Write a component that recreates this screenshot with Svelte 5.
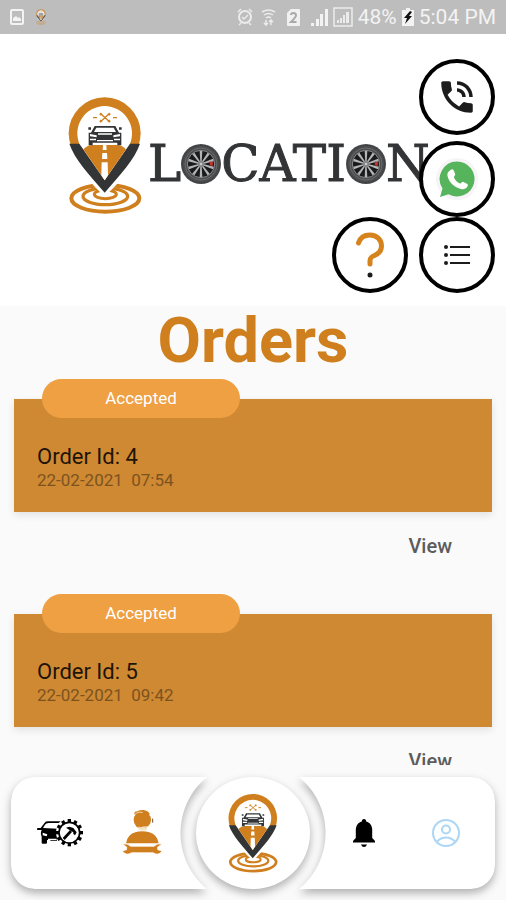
<script lang="ts">
  let orders = [
    { id: 4, status: "Accepted", date: "22-02-2021", time: "07:54" },
    { id: 5, status: "Accepted", date: "22-02-2021", time: "09:42" },
  ];

  const spokes = [0, 36, 72, 108, 144, 180, 216, 252, 288, 324];
  const teeth = [0, 30, 60, 90, 120, 150, 180, 210, 240, 270, 300, 330];
</script>

{#snippet pin(cls: string)}
  <svg class={cls} viewBox="56 32 222 360" aria-hidden="true">
    <g fill="none" stroke="#cf7f1d">
      <ellipse cx="168" cy="339" rx="102" ry="40" stroke-width="12" />
      <ellipse cx="168" cy="333" rx="67" ry="25" stroke-width="10" />
      <ellipse cx="168" cy="327" rx="33" ry="13" stroke-width="9" />
    </g>
    <path d="M72 220 H260 C236 262 206 294 166 334 C126 294 96 262 72 220Z" fill="#fff" />
    <circle cx="166" cy="144" r="108" fill="#cf7f1d" />
    <path d="M60 175 H272 C256 222 214 266 166 322 C118 266 76 222 60 175Z" fill="#333436" />
    <path d="M90 175 A82 82 0 1 1 242 175 L166 285Z" fill="#fff" />
    <path d="M102 192 Q114 179 130 179 H202 Q218 179 230 192 L166 285Z" fill="#cf7f1d" />
    <path d="M161 179h10l1 15h-12zM159 203h14l1 18h-16zM157 231h18l1 39-10 15-10-15z" fill="#fff" />
    <path d="M136 122 H198 L209 142 H216 V180 H204 V172 H130 V180 H118 V142 H125Z" fill="#333436" />
    <path d="M141 127 H193 L200 140 H134Z" fill="#fff" />
    <path d="M122 146 l20 4 v6 l-20 -3zM212 146 l-20 4 v6 l20 -3zM146 144h42v4h-42zM122 160h18v5h-18zM194 160h18v5h-18zM143 164h48v4h-48z" fill="#fff" />
    <path d="M117 126h8v7h-8zM209 126h8v7h-8z" fill="#333436" />
    <g stroke="#cf7f1d" stroke-width="4" fill="none">
      <path d="M156 87 L178 107 M178 87 L156 107 M131 97h12M191 97h12" />
      <path d="M152 84l5 5M182 84l-5 5M152 110l5 -5M182 110l-5 -5" stroke-width="7" />
    </g>
  </svg>
{/snippet}

{#snippet tyre()}
  <svg class="tyre" viewBox="-60 -60 120 120" aria-hidden="true">
    <circle r="60" fill="#4b4c4e" />
    <circle r="56" fill="none" stroke="#2a2a2b" stroke-width="2" stroke-dasharray="4 3" />
    <circle r="48" fill="none" stroke="#6b6c6e" stroke-width="3" />
    <circle r="41" fill="#1b1b1c" stroke="#8d8e90" stroke-width="3" />
    {#each spokes as angle}
      <path d="M-2 -6 L-4 -39 L4 -39 L2 -6Z" fill="#b4b5b7" transform="rotate({angle})" />
    {/each}
    <path d="M27 -8 L36 -5 L35 6 L26 4Z" fill="#c8322f" />
    <circle r="9" fill="#838486" />
    <circle r="4" fill="#c9cacb" />
  </svg>
{/snippet}

<div class="screen">
  <div class="status">
    <svg width="14" height="16" viewBox="0 0 14 16">
      <rect x="1" y="1" width="12" height="14" rx="1" fill="none" stroke="#f3f3f3" stroke-width="2" />
      <path d="M3 12V9l3-2 2 2 1-1 2 2v2z" fill="#f3f3f3" />
    </svg>
    {@render pin("mini-pin")}
    <div class="status-right">
      <svg width="16" height="18" viewBox="0 0 16 18" fill="none" stroke="#ececec" stroke-width="2">
        <circle cx="8" cy="9" r="6" />
        <path d="M5 9l2 2 4-4M1 4l3-3M15 4l-3-3M4 15l-2 2M12 15l2 2" stroke-width="1.5" />
      </svg>
      <svg class="wifi" width="15" height="18" viewBox="0 0 15 18" fill="none" stroke="#ececec" stroke-width="1.5">
        <path d="M1 4q6.5-4 13 0M3 7q4.5-3 9 0M5 10q2.5-2 5 0" />
        <path d="M5 12v5M3 15l2 2 2-2M10 17v-5M8 14l2-2 2 2" />
      </svg>
      <svg class="sim" width="13" height="17" viewBox="0 0 13 17">
        <path d="M4 0h8q1 0 1 1v15q0 1-1 1H1q-1 0-1-1V4z" fill="#f0f0f0" />
        <path d="M4 6q0-2 2.5-2T9 6.5Q9 8 4 13h5.5" fill="none" stroke="#aaa" stroke-width="2" />
      </svg>
      <svg class="signal" width="17" height="17" viewBox="0 0 17 17" fill="#f3f3f3">
        <path d="M0 14h3v3H0zM5 10h3v7H5zM9 5h3v12H9zM14 0h3v17h-3z" />
      </svg>
      <svg width="20" height="20" viewBox="0 0 20 20">
        <rect x="1" y="1" width="18" height="18" fill="none" stroke="#ececec" stroke-width="1.5" />
        <path d="M4 13h2v3H4zM7 11h2v5H7zM10 8h2v8h-2zM13 5h3v11h-3z" fill="#ececec" />
      </svg>
      <span>48%</span>
      <svg width="12" height="18" viewBox="0 0 12 18">
        <path d="M4 0h4v2h4v16H0V2h4z" fill="#f3f3f3" />
        <path d="M8 3L2 10h3l-2 6 7-8H7l3-4z" fill="#111" />
      </svg>
      <span>5:04 PM</span>
    </div>
  </div>

  <header>
    <div class="logo" role="img" aria-label="Location">
      {@render pin("big-pin")}
      <div class="wordmark">L{@render tyre()}CATI{@render tyre()}N</div>
    </div>

    <div class="actions">
      <button class="round" aria-label="Call">
        <svg width="42" height="42" viewBox="0 0 24 24" fill="#1c1c1c">
          <path d="M20 15.5c-1.25 0-2.45-.2-3.57-.57-.35-.11-.74-.03-1.02.24l-2.2 2.2c-2.83-1.44-5.15-3.75-6.59-6.59l2.2-2.21c.28-.26.36-.65.25-1C8.7 6.45 8.5 5.25 8.5 4c0-.55-.45-1-1-1H4c-.55 0-1 .45-1 1 0 9.39 7.61 17 17 17 .55 0 1-.45 1-1v-3.5c0-.55-.45-1-1-1zM19 12h2c0-4.97-4.03-9-9-9v2c3.87 0 7 3.13 7 7zm-4 0h2c0-2.76-2.24-5-5-5v2c1.66 0 3 1.34 3 3z" />
        </svg>
      </button>
      <button class="round" aria-label="WhatsApp">
        <svg width="44" height="44" viewBox="0 0 44 44">
          <circle cx="22" cy="22" r="21" fill="#f6f4f6" />
          <path d="M22 4.5A17.5 17.5 0 1 1 13.5 37.3L5 40l2.5-8.5A17.5 17.5 0 0 1 22 4.5z" fill="#56b45c" />
          <path d="M15.5 13c1.5-1.2 2.5-1 3.2.5l1.5 3.5c.5 1.2-1.6 2.5-1.2 3.5 1.2 2.8 3.3 4.9 6 6 1.2.5 2-2.2 3.4-1.6l3.5 1.8c1.3.8 1.1 1.6.4 3-1 2-4 3-6.5 2.3C18.5 29.8 14 25 12.5 19c-.7-2.6.8-4.6 3-6z" fill="#fff" />
        </svg>
      </button>
      <div class="pair">
        <button class="round" aria-label="Help">
          <svg width="30" height="46" viewBox="0 0 30 46">
            <path d="M3.5 11C5 6 9 3 15 3C22 3 26.5 8 26.5 14C26.5 19 24 21.500 19.500 23.500C16 25 15 26 15 29V32" fill="none" stroke="#d6831d" stroke-width="5" stroke-linecap="round" />
            <circle cx="15" cy="43" r="2.5" fill="#1c1c1c" />
          </svg>
        </button>
        <button class="round" aria-label="Menu">
          <svg width="26" height="22" viewBox="0 0 26 22" fill="#1c1c1c">
            <circle cx="2" cy="3" r="2" /><circle cx="2" cy="11" r="2" /><circle cx="2" cy="19" r="2" />
            <path d="M6 2h20v2H6zM6 10h20v2H6zM6 18h20v2H6z" />
          </svg>
        </button>
      </div>
    </div>
  </header>

  <h1>Orders</h1>

  <main>
    {#each orders as order}
      <article>
        <div class="badge">{order.status}</div>
        <div class="card">
          <div class="order-id">Order Id: {order.id}</div>
          <div class="date">{order.date + "  " + order.time}</div>
        </div>
        <div class="footer"><button class="view">View</button></div>
      </article>
    {/each}
  </main>

  <nav>
    <div class="bar-shadow"><div class="bar"></div></div>
    <div class="tabs">
      <button aria-label="Car service">
        <svg width="48" height="30" viewBox="108 174 144 90">
          <path d="M112 204h10l12-16q3-4 10-4h38l-6 5h-30q-8 0-11 5l-6 10 44 2-2 36h-20v-2h-10v8q0 3-4 3h-8q-4 0-4-3v-18q-4-6-2-14l2-6h-14z" />
          <path d="M128 218l14 5-2 6-12-3zM144 236h26v4h-26z" fill="#fff" />
          <circle cx="208" cy="218" r="40" fill="#fff" />
          {#each teeth as angle}
            <path d="M-5 -41h10v10h-10z" transform="translate(208 218) rotate({angle})" />
          {/each}
          <circle cx="208" cy="218" r="31" fill="#fff" stroke="#000" stroke-width="5" />
          <path d="M191 237L213 213" stroke="#000" stroke-width="8" />
          <path d="M198 203l10-3 12 4 10 13-5 9-5-4v-5l-8-5z" />
        </svg>
      </button>
      <button aria-label="Mechanic">
        <svg width="42" height="48" viewBox="363 148 126 144">
          <g fill="#cf7f1d">
            <circle cx="427" cy="181" r="26" />
            <path d="M403 164q-1-9 9-9 8-5 18-4 14 1 20 13l-6 1q-18-8-34 0z" />
            <path d="M378 251q4-26 28-33 20-7 42 0 24 7 28 33z" />
            <path d="M368 254q14-5 24 6h70q10-11 24-6l-13 8v8l13 4q-10 16-27 5h-64q-17 11-28-5l13-4v-8z" stroke="#fff" stroke-width="2" />
          </g>
          <path d="M406 162q10-7 22-4M457 185q-2 13-15 16l-12 1" fill="none" stroke="#fff" stroke-width="2" />
          <path d="M416 199q5 6 9 3t8 0q6 3 8-3v10q-12 7-25 0z" fill="#f5dfc3" />
          <path d="M458 177v12" stroke="#7b4a32" stroke-width="3" />
        </svg>
      </button>
      <button class="home" aria-label="Home">{@render pin("home-pin")}</button>
      <button aria-label="Notifications">
        <svg width="24" height="28" viewBox="0 0 24 28">
          <path d="M12 0c1.5 0 2.2 1 2.2 2.5 4 1 6 4.5 6 8.5v8L23 22v1.500H1V22l2.800-3v-8c0-4 2-7.500 6-8.500C9.800 1 10.500 0 12 0zM9 25.500h6q-1 2.500-3 2.500t-3-2.500z" />
        </svg>
      </button>
      <button aria-label="Profile">
        <svg width="28" height="28" viewBox="0 0 28 28" fill="none" stroke="#acd6f6" stroke-width="2">
          <circle cx="14" cy="14" r="13" />
          <circle cx="14" cy="10.500" r="4" />
          <path d="M5 22.500Q9 18.500 14 18.500t9 4" />
        </svg>
      </button>
    </div>
  </nav>
</div>

<style>
  :global(body) {
    background: #fafafa;
  }
  .screen {
    display: flex;
    flex-direction: column;
    height: 100vh;
    font-family: Roboto, "Liberation Sans", sans-serif;
    background: #fafafa;
  }
  button {
    background: none;
    border: none;
    padding: 0;
    font-family: inherit;
    cursor: pointer;
  }
  svg {
    display: block;
    flex: none;
  }

  .status {
    display: flex;
    align-items: center;
    gap: 11px;
    height: 34px;
    flex: none;
    padding: 0 10px;
    background: #bdbdbd;
    color: #f3f3f3;
    font-size: 21px;
  }
  .mini-pin {
    width: 12px;
    height: 16px;
    opacity: 0.7;
  }
  .status-right {
    display: flex;
    align-items: center;
    gap: 5px;
    margin-left: auto;
  }
  .wifi,
  .sim {
    margin: 0 3px;
  }
  .signal {
    margin-left: 3px;
  }

  header {
    position: relative;
    display: flex;
    align-items: flex-start;
    background: #fff;
    height: 272px;
    flex: none;
  }
  .logo {
    display: flex;
    align-items: center;
    gap: 6px;
    margin: 62px 0 0 68px;
  }
  .big-pin {
    width: 74px;
    height: 120px;
  }
  .wordmark {
    display: flex;
    align-items: center;
    font-family: "DejaVu Serif", serif;
    font-size: 50px;
    line-height: 60px;
    color: #333436;
    -webkit-text-stroke: 1px #333436;
    margin-top: 16px;
  }
  .tyre {
    width: 40px;
    height: 40px;
  }
  .actions {
    position: absolute;
    top: 25px;
    right: 11px;
    display: flex;
    flex-direction: column;
    align-items: flex-end;
  }
  .round {
    display: grid;
    place-items: center;
    box-sizing: border-box;
    width: 76px;
    height: 76px;
    border: 4px solid #000;
    border-radius: 50%;
    background: #fff;
  }
  .round:first-child {
    margin-bottom: 6px;
  }
  .pair {
    display: flex;
    gap: 11px;
  }
  .pair .round {
    margin: 0;
  }

  h1 {
    margin: 0;
    text-align: center;
    font-size: 63px;
    line-height: 70px;
    font-weight: 700;
    color: #cf7f1d;
  }
  main {
    flex: 1;
    min-height: 0;
    padding-top: 3px;
    overflow: auto;
    scrollbar-width: none;
  }
  article {
    padding: 0 14px;
  }
  .badge {
    position: relative;
    width: 198px;
    margin: 0 0 -19px 28px;
    border-radius: 20px;
    background: #eea043;
    color: #fff;
    text-align: center;
    font-size: 17px;
    line-height: 39px;
  }
  .card {
    padding: 46px 23px 21px;
    background: #cf8932;
    box-shadow: 0 3px 8px rgba(0, 0, 0, 0.1);
  }
  .order-id {
    font-size: 22px;
    line-height: 24px;
    color: #1f1408;
  }
  .date {
    font-size: 17px;
    line-height: 22px;
    white-space: pre;
    color: #7c5320;
  }
  .footer {
    display: flex;
    justify-content: flex-end;
    padding: 22px 40px 36px;
  }
  .view {
    font-size: 20px;
    line-height: 24px;
    font-weight: 500;
    color: #5c5c5c;
  }

  nav {
    display: grid;
    padding: 12px 11px 11px;
  }
  .bar-shadow,
  .tabs {
    grid-area: 1 / 1;
  }
  .bar-shadow {
    display: grid;
    filter: drop-shadow(0 4px 4px rgba(0, 0, 0, 0.3));
  }
  .bar {
    height: 112px;
    border-radius: 24px;
    background: #fff;
    mask: radial-gradient(circle at center, transparent 72px, #000 73px);
  }
  .tabs {
    position: relative;
    display: grid;
    grid-template-columns: 1fr 1fr 140px 1fr 1fr;
    place-items: center;
    padding: 0 8px;
  }
  .home {
    display: grid;
    place-items: center;
    width: 114px;
    height: 112px;
    border-radius: 50%;
    background: #fff;
    box-shadow: 0 4px 8px rgba(0, 0, 0, 0.3);
  }
  .home-pin {
    width: 50px;
    height: 81px;
  }
</style>
